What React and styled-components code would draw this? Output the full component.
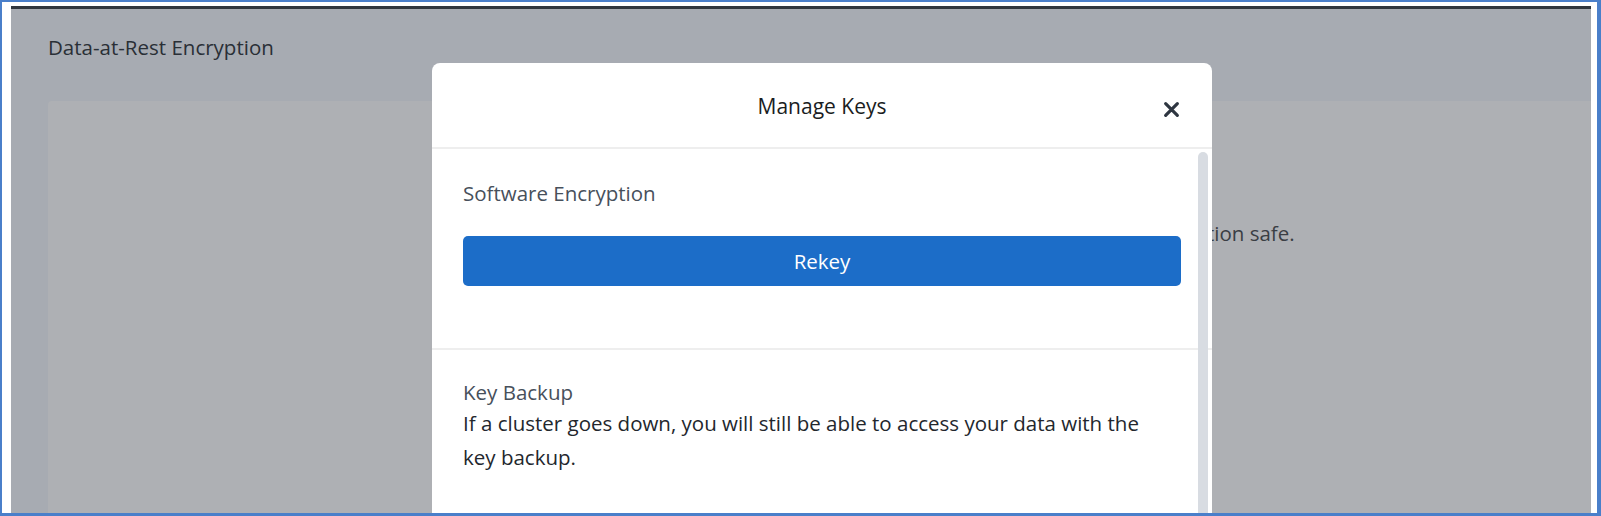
import React from 'react';
import styled, { createGlobalStyle } from 'styled-components';

const GlobalStyle = createGlobalStyle`
  html, body {
    margin: 0;
    padding: 0;
    background: #ffffff;
  }
  * {
    box-sizing: border-box;
  }
  body {
    font-family: 'Open Sans', Lato, sans-serif;
  }
`;

const Frame = styled.div`
  width: 1601px;
  height: 516px;
  display: flex;
  background: #ffffff;
  border: 2px solid #4a7fca;
  border-right-width: 4px;
  border-bottom-width: 3px;
  padding: 4px 6px 0 9px;
`;

const Screen = styled.div`
  position: relative;
  flex: 1;
  display: flex;
  flex-direction: column;
  overflow: hidden;
  border-top: 3px solid #30363e;
  background: #a7abb2;
`;

const Page = styled.div`
  flex: 1;
  display: flex;
  flex-direction: column;
  padding-left: 37px;
`;

const PageTitle = styled.h1`
  margin: 0;
  height: 92px;
  padding-top: 26px;
  font-size: 20.5px;
  line-height: 24px;
  font-weight: 400;
  color: #2a2f36;
`;

const Card = styled.section`
  flex: 1;
  background: #aeb0b4;
  border-top-left-radius: 4px;
  padding: 119px 0 0 790px;
`;

const CardText = styled.p`
  margin: 0;
  font-size: 20.5px;
  line-height: 26px;
  white-space: nowrap;
  color: #3a3e44;
`;

const Modal = styled.div`
  position: absolute;
  left: 421px;
  top: 54px;
  width: 780px;
  height: 520px;
  background: #ffffff;
  border-radius: 8px;
  display: flex;
  flex-direction: column;
`;

const ModalHeader = styled.header`
  position: relative;
  height: 86px;
  display: flex;
  align-items: center;
  justify-content: center;
  border-bottom: 2px solid #eeeeee;
`;

const ModalTitle = styled.h2`
  margin: 0;
  padding-top: 2px;
  font-size: 21px;
  line-height: 26px;
  font-weight: 400;
  color: #1a1d22;
`;

const CloseButton = styled.button`
  position: absolute;
  right: 32px;
  top: 37px;
  width: 18px;
  height: 18px;
  padding: 0;
  border: none;
  background: none;
  display: flex;
  align-items: center;
  justify-content: center;
`;

const ModalBody = styled.div`
  position: relative;
  flex: 1;
`;

const Scrollbar = styled.div`
  position: absolute;
  right: 4px;
  top: 3px;
  width: 10px;
  bottom: 0;
  border-radius: 5px 5px 0 0;
  background: #d8dce2;
`;

const Section = styled.div`
  padding: ${p => p.$pad};
  border-bottom: ${p => (p.$divided ? '2px solid #eeeeee' : 'none')};
`;

const SectionTitle = styled.h3`
  margin: 0;
  font-size: 20.5px;
  font-weight: 400;
  line-height: 26px;
  color: #47505b;
`;

const Description = styled.p`
  margin: 1px 0 0;
  max-width: 700px;
  font-size: 20.5px;
  line-height: 34px;
  color: #23272d;
`;

const PrimaryButton = styled.button`
  display: block;
  width: 100%;
  height: 50px;
  margin-top: ${p => p.$top};
  border: none;
  border-radius: 5px;
  background: #1c6dc8;
  color: #ffffff;
  font-family: inherit;
  font-size: 20.5px;
`;

const CloseIcon = () => (
  <svg width="17" height="17" viewBox="0 0 16 16">
    <path
      d="M2.5 2.5 L13.5 13.5 M13.5 2.5 L2.5 13.5"
      stroke="#2e3641"
      strokeWidth="3"
      strokeLinecap="round"
    />
  </svg>
);

const App = () => (
  <>
    <GlobalStyle />
    <Frame>
      <Screen>
        <Page>
          <PageTitle>Data-at-Rest Encryption</PageTitle>
          <Card>
            <CardText>Back up your key to keep your information safe.</CardText>
          </Card>
        </Page>

        <Modal>
          <ModalHeader>
            <ModalTitle>Manage Keys</ModalTitle>
            <CloseButton aria-label="Close">
              <CloseIcon />
            </CloseButton>
          </ModalHeader>
          <ModalBody>
            <Scrollbar />
            <Section $pad="31px 31px 62px" $divided>
              <SectionTitle>Software Encryption</SectionTitle>
              <PrimaryButton $top="30px">Rekey</PrimaryButton>
            </Section>
            <Section $pad="29px 31px 30px">
              <SectionTitle>Key Backup</SectionTitle>
              <Description>
                If a cluster goes down, you will still be able to access your
                data with the key backup.
              </Description>
            </Section>
          </ModalBody>
        </Modal>
      </Screen>
    </Frame>
  </>
);

export default App;
